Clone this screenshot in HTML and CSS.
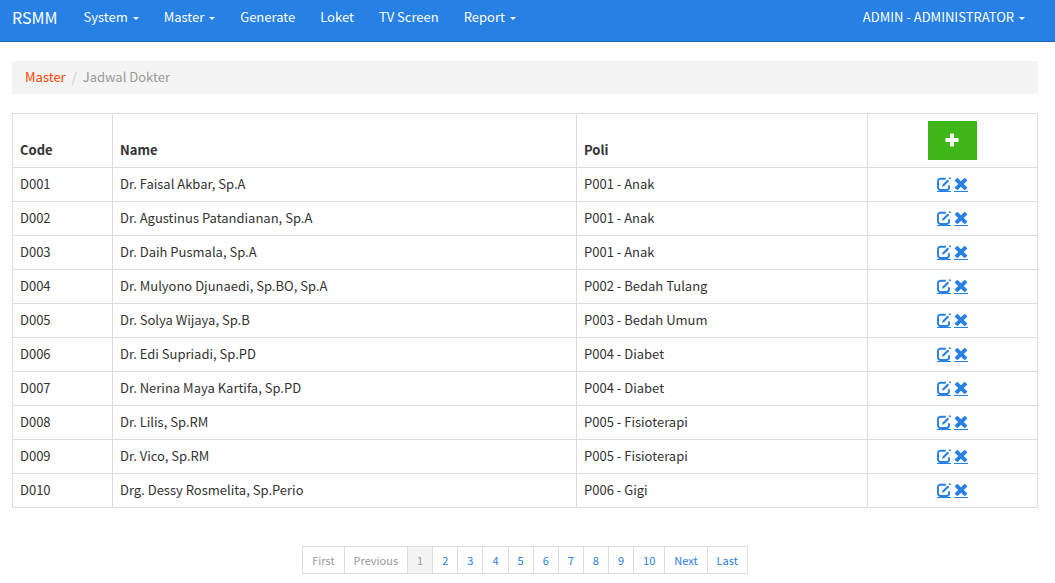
FILE: index.html
```html
<!DOCTYPE html>
<html lang="id">
<head>
<meta charset="utf-8">
<meta name="viewport" content="width=device-width, initial-scale=1">
<title>RSMM - Jadwal Dokter</title>
<link rel="stylesheet" href="styles.css">
</head>
<body>
<svg class="sprite" aria-hidden="true">
  <symbol id="i-edit" viewBox="0 0 14 14">
    <path d="M8.800 1.700H3.400A2.400 2.400 0 0 0 1 4.100v6.500A2.400 2.400 0 0 0 3.400 13h6.200a2.400 2.400 0 0 0 2.400-2.400V8.300" fill="none" stroke="currentColor" stroke-width="1.900"/>
    <path d="M5 9.700l.6-2.300 5-5 1.600 1.600-5 5z" fill="currentColor"/>
    <path d="M11.700 1.300l1-1q.3-.2.600 0l.7.700q.2.300 0 .600l-.9 1z" fill="currentColor"/>
  </symbol>
  <symbol id="i-remove" viewBox="0 0 14 14">
    <path d="M3.700.9L7 4.200 10.300.9q.3-.2.600 0l2.200 2.200q.2.300 0 .600L9.800 7l3.300 3.300q.2.300 0 .600l-2.200 2.200q-.3.200-.6 0L7 9.800l-3.300 3.300q-.3.200-.6 0L.9 10.900q-.2-.3 0-.6L4.200 7 .9 3.700q-.2-.3 0-.6L3.100.9q.3-.2.600 0z" fill="currentColor"/>
  </symbol>
  <symbol id="i-plus" viewBox="0 0 14 14">
    <path d="M5.500.5h3q.5 0 .5.500v4h4q.5 0 .5.500v3q0 .5-.5.500H9v4q0 .5-.5.500h-3q-.5 0-.5-.5V9H1q-.5 0-.5-.5v-3Q.5 5 1 5h4V1q0-.5.500-.5z" fill="currentColor"/>
  </symbol>
</svg>
<header class="navbar">
  <a class="brand" href="#">RSMM</a>
  <nav class="menu">
    <a href="#">System <span class="caret"></span></a>
    <a href="#">Master <span class="caret"></span></a>
    <a href="#">Generate</a>
    <a href="#">Loket</a>
    <a href="#">TV Screen</a>
    <a href="#">Report <span class="caret"></span></a>
  </nav>
  <a class="user" href="#">ADMIN - ADMINISTRATOR <span class="caret"></span></a>
</header>
<main class="content">
  <nav class="breadcrumb"><a href="#">Master</a><span class="divider">/</span><span>Jadwal Dokter</span></nav>
  <table class="schedule">
    <thead>
      <tr><th class="col-code">Code</th><th class="col-name">Name</th><th class="col-poli">Poli</th><th class="col-action"><button class="add" type="button" aria-label="Tambah"><svg class="icon"><use href="#i-plus"/></svg></button></th></tr>
    </thead>
    <tbody>
      <tr><td>D001</td><td>Dr. Faisal Akbar, Sp.A</td><td>P001 - Anak</td><td><div class="actions"><a href="#" aria-label="Edit"><svg class="icon"><use href="#i-edit"/></svg></a><a href="#" aria-label="Hapus"><svg class="icon"><use href="#i-remove"/></svg></a></div></td></tr>
      <tr><td>D002</td><td>Dr. Agustinus Patandianan, Sp.A</td><td>P001 - Anak</td><td><div class="actions"><a href="#" aria-label="Edit"><svg class="icon"><use href="#i-edit"/></svg></a><a href="#" aria-label="Hapus"><svg class="icon"><use href="#i-remove"/></svg></a></div></td></tr>
      <tr><td>D003</td><td>Dr. Daih Pusmala, Sp.A</td><td>P001 - Anak</td><td><div class="actions"><a href="#" aria-label="Edit"><svg class="icon"><use href="#i-edit"/></svg></a><a href="#" aria-label="Hapus"><svg class="icon"><use href="#i-remove"/></svg></a></div></td></tr>
      <tr><td>D004</td><td>Dr. Mulyono Djunaedi, Sp.BO, Sp.A</td><td>P002 - Bedah Tulang</td><td><div class="actions"><a href="#" aria-label="Edit"><svg class="icon"><use href="#i-edit"/></svg></a><a href="#" aria-label="Hapus"><svg class="icon"><use href="#i-remove"/></svg></a></div></td></tr>
      <tr><td>D005</td><td>Dr. Solya Wijaya, Sp.B</td><td>P003 - Bedah Umum</td><td><div class="actions"><a href="#" aria-label="Edit"><svg class="icon"><use href="#i-edit"/></svg></a><a href="#" aria-label="Hapus"><svg class="icon"><use href="#i-remove"/></svg></a></div></td></tr>
      <tr><td>D006</td><td>Dr. Edi Supriadi, Sp.PD</td><td>P004 - Diabet</td><td><div class="actions"><a href="#" aria-label="Edit"><svg class="icon"><use href="#i-edit"/></svg></a><a href="#" aria-label="Hapus"><svg class="icon"><use href="#i-remove"/></svg></a></div></td></tr>
      <tr><td>D007</td><td>Dr. Nerina Maya Kartifa, Sp.PD</td><td>P004 - Diabet</td><td><div class="actions"><a href="#" aria-label="Edit"><svg class="icon"><use href="#i-edit"/></svg></a><a href="#" aria-label="Hapus"><svg class="icon"><use href="#i-remove"/></svg></a></div></td></tr>
      <tr><td>D008</td><td>Dr. Lilis, Sp.RM</td><td>P005 - Fisioterapi</td><td><div class="actions"><a href="#" aria-label="Edit"><svg class="icon"><use href="#i-edit"/></svg></a><a href="#" aria-label="Hapus"><svg class="icon"><use href="#i-remove"/></svg></a></div></td></tr>
      <tr><td>D009</td><td>Dr. Vico, Sp.RM</td><td>P005 - Fisioterapi</td><td><div class="actions"><a href="#" aria-label="Edit"><svg class="icon"><use href="#i-edit"/></svg></a><a href="#" aria-label="Hapus"><svg class="icon"><use href="#i-remove"/></svg></a></div></td></tr>
      <tr><td>D010</td><td>Drg. Dessy Rosmelita, Sp.Perio</td><td>P006 - Gigi</td><td><div class="actions"><a href="#" aria-label="Edit"><svg class="icon"><use href="#i-edit"/></svg></a><a href="#" aria-label="Hapus"><svg class="icon"><use href="#i-remove"/></svg></a></div></td></tr>
    </tbody>
  </table>
  <nav class="pagination" aria-label="Halaman">
    <a class="muted" href="#">First</a><a class="muted" href="#">Previous</a><a class="muted current" href="#" aria-current="page">1</a><a href="#">2</a><a href="#">3</a><a href="#">4</a><a href="#">5</a><a href="#">6</a><a href="#">7</a><a href="#">8</a><a href="#">9</a><a href="#">10</a><a href="#">Next</a><a href="#">Last</a>
  </nav>
</main>
</body>
</html>
```
FILE: styles.css
```css
* { box-sizing: border-box; }
body {
  margin: 0;
  background: #fff;
  color: #333;
  font: 13px/18px "Noto Sans CJK SC", "Open Sans", sans-serif;
}
a { color: #2780e3; text-decoration: none; }
.sprite { display: none; }
.icon { display: block; width: 14px; height: 14px; }

.navbar {
  display: flex;
  align-items: flex-start;
  padding: 8px 30px 15px 12px;
  background: #2780e3;
  border-bottom: 1px solid #1967be;
}
.navbar a { color: #fff; white-space: nowrap; }
.navbar .brand { font-size: 16px; margin-right: 26px; }
.menu { display: flex; flex: 1; gap: 25px; }
.caret {
  display: inline-block;
  margin-left: 2px;
  vertical-align: middle;
  border-top: 3px solid #fff;
  border-left: 3px solid transparent;
  border-right: 3px solid transparent;
}

.content { padding: 19px 17px 9px 12px; }
.breadcrumb {
  display: flex;
  padding: 7px 13px 8px;
  margin-bottom: 19px;
  background: #f4f4f4;
  color: #999;
}
.breadcrumb a { color: #ff4400; }
.divider { color: #ccc; padding: 0 6px; }

.schedule { width: 100%; table-layout: fixed; border-collapse: collapse; }
.schedule th, .schedule td {
  border: 1px solid #ddd;
  padding: 7px 7px 8px;
  text-align: left;
}
.schedule th { vertical-align: bottom; }
.schedule .col-code { width: 100px; }
.schedule .col-name { width: 464px; }
.schedule .col-poli { width: 291px; }
.schedule .col-action { width: 170px; padding-bottom: 7px; }
.add {
  display: block;
  margin: 0 auto;
  padding: 12px 18px 13px 17px;
  border: 0;
  background: #3fb618;
  color: #fff;
}
.actions { display: flex; justify-content: center; gap: 3px; }
.actions a { border-bottom: 1px solid #2780e3; }

.pagination {
  display: flex;
  justify-content: center;
  margin-top: 38px;
  font-size: 11px;
}
.pagination a {
  padding: 4px 9px;
  border: 1px solid #ddd;
  border-left-width: 0;
}
.pagination a:first-child { border-left-width: 1px; }
.pagination .muted { color: #999; }
.pagination .current { background: #f4f4f4; }
```
